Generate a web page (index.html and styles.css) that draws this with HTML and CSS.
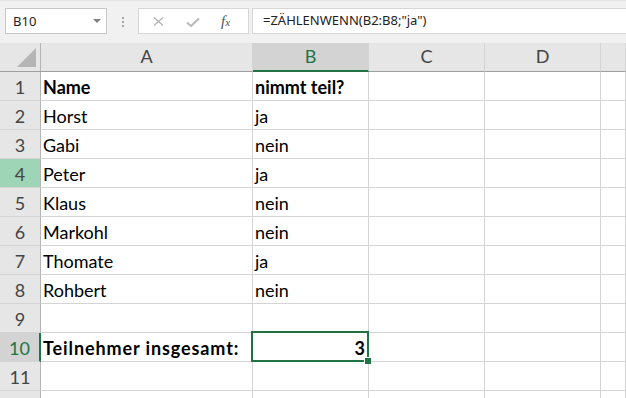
FILE: index.html
```html
<!DOCTYPE html>
<html lang="de">

<head>
    <meta charset="UTF-8">
    <title>ZÄHLENWENN</title>
    <link rel="stylesheet" href="styles.css">
</head>

<body>

    <!-- Bearbeitungsleiste -->
    <div class="toolbar">
        <div class="name-box">
            <span>B10</span>
            <span class="name-arrow"></span>
        </div>
        <div class="grip"><i></i><i></i><i></i></div>
        <div class="fx-box">
            <svg class="icon-x" width="11" height="9" viewBox="0 0 11 9">
                <path d="M1 0.5 L10 8.5 M10 0.5 L1 8.5" stroke="#b3b3b3" stroke-width="1.3" fill="none"/>
            </svg>
            <svg class="icon-ok" width="14" height="9" viewBox="0 0 14 9">
                <path d="M1 4.5 L5 8 L13 0.5" stroke="#bcbcbc" stroke-width="2.2" fill="none"/>
            </svg>
            <span class="fx">f<small>x</small></span>
        </div>
        <div class="formula">=ZÄHLENWENN(B2:B8;"ja")</div>
    </div>

    <!-- Tabelle -->
    <div class="sheet">
        <div class="corner">
            <svg width="40" height="28" viewBox="0 0 40 28">
                <polygon points="36,5 36,24 17,24" fill="#b5b5b5"/>
            </svg>
        </div>
        <div class="ch">A</div>
        <div class="ch sel">B</div>
        <div class="ch">C</div>
        <div class="ch">D</div>
        <div class="ch"></div>

        <div class="rh">1</div>
        <div class="cell bold">Name</div>
        <div class="cell bold">nimmt teil?</div>
        <div class="cell"></div>
        <div class="cell"></div>
        <div class="cell"></div>

        <div class="rh">2</div>
        <div class="cell">Horst</div>
        <div class="cell">ja</div>
        <div class="cell"></div>
        <div class="cell"></div>
        <div class="cell"></div>

        <div class="rh">3</div>
        <div class="cell">Gabi</div>
        <div class="cell">nein</div>
        <div class="cell"></div>
        <div class="cell"></div>
        <div class="cell"></div>

        <div class="rh hl">4</div>
        <div class="cell">Peter</div>
        <div class="cell">ja</div>
        <div class="cell"></div>
        <div class="cell"></div>
        <div class="cell"></div>

        <div class="rh">5</div>
        <div class="cell">Klaus</div>
        <div class="cell">nein</div>
        <div class="cell"></div>
        <div class="cell"></div>
        <div class="cell"></div>

        <div class="rh">6</div>
        <div class="cell">Markohl</div>
        <div class="cell">nein</div>
        <div class="cell"></div>
        <div class="cell"></div>
        <div class="cell"></div>

        <div class="rh">7</div>
        <div class="cell">Thomate</div>
        <div class="cell">ja</div>
        <div class="cell"></div>
        <div class="cell"></div>
        <div class="cell"></div>

        <div class="rh">8</div>
        <div class="cell">Rohbert</div>
        <div class="cell">nein</div>
        <div class="cell"></div>
        <div class="cell"></div>
        <div class="cell"></div>

        <div class="rh">9</div>
        <div class="cell"></div>
        <div class="cell"></div>
        <div class="cell"></div>
        <div class="cell"></div>
        <div class="cell"></div>

        <div class="rh sel">10</div>
        <div class="cell bold wide">Teilnehmer insgesamt:</div>
        <div class="cell bold num active">3</div>
        <div class="cell"></div>
        <div class="cell"></div>
        <div class="cell"></div>

        <div class="rh">11</div>
        <div class="cell"></div>
        <div class="cell"></div>
        <div class="cell"></div>
        <div class="cell"></div>
        <div class="cell"></div>

        <!-- Zeile 12 ist nur angeschnitten -->
        <div class="rh"></div>
        <div class="cell"></div>
        <div class="cell"></div>
        <div class="cell"></div>
        <div class="cell"></div>
        <div class="cell"></div>
    </div>

</body>

</html>
```

FILE: styles.css
```css
* {
    margin: 0;
    padding: 0;
    box-sizing: border-box;
}

body {
    width: 626px;
    height: 398px;
    overflow: hidden;
    background: #fff;
    font-family: Lato, "Liberation Sans", sans-serif;
}

/* Bearbeitungsleiste oben */
.toolbar {
    height: 43px;
    background: #f1f1f1;
    border-top: 1px solid #e4e4e4;
    display: flex;
    align-items: flex-start;
    padding: 7px 0 0 5px;
    font-family: "Noto Sans", sans-serif;
    font-size: 13px;
    color: #222;
}

.name-box {
    width: 102px;
    height: 26px;
    background: #fff;
    border: 1px solid #c6c6c6;
    display: flex;
    align-items: center;
    justify-content: space-between;
    padding: 0 5px 0 7px;
}

.name-arrow {
    width: 0;
    height: 0;
    border-left: 4px solid transparent;
    border-right: 4px solid transparent;
    border-top: 4px solid #7f7f7f;
}

.grip {
    width: 31px;
    display: flex;
    flex-direction: column;
    align-items: center;
    gap: 2px;
    padding-top: 9px;
}

.grip i {
    width: 2px;
    height: 2px;
    background: #a8a8a8;
}

.fx-box {
    width: 111px;
    height: 26px;
    background: #fff;
    border: 1px solid #d6d6d6;
    display: flex;
    align-items: center;
    padding-left: 14px;
}

.icon-x {
    margin-right: 22px;
}

.icon-ok {
    margin-top: 2px;
    margin-right: 21px;
}

.fx {
    font-family: "Liberation Serif", serif;
    font-style: italic;
    font-size: 15px;
    color: #555;
}

.fx small {
    font-size: 11px;
}

.formula {
    flex: 1;
    height: 26px;
    margin-left: 3px;
    margin-right: -2px;
    background: #fff;
    border: 1px solid #d6d6d6;
    padding-left: 10px;
    line-height: 23px;
}

/* Tabellenraster */
.sheet {
    display: grid;
    grid-template-columns: 41px 212px 116px 116px 116px 1fr;
    grid-auto-rows: 29px;
    font-size: 18px;
}

.sheet > div {
    border-right: 1px solid #d4d4d4;
    border-bottom: 1px solid #d4d4d4;
}

.corner {
    background: #e6e6e6;
}

.sheet > .corner,
.sheet > .ch {
    border-bottom: 1px solid #9f9f9f;
}

.corner svg {
    display: block;
}

.ch {
    background: #e6e6e6;
    color: #444;
    text-align: center;
    line-height: 27px;
}

.sheet > .corner,
.sheet > .rh {
    border-right: 1px solid #b4b4b4;
}

.rh {
    background: #e6e6e6;
    color: #444;
    display: flex;
    align-items: flex-end;
    justify-content: center;
    line-height: 22px;
    padding-bottom: 2px;
}

.sheet > .ch.sel {
    background: #d3d3d3;
    color: #217346;
    border-bottom: 2px solid #217346;
}

.sheet > .rh.sel {
    background: #d3d3d3;
    color: #217346;
    border-right: 2px solid #217346;
}

.rh.hl {
    background: #9fd5b7;
}

.cell {
    display: flex;
    align-items: flex-end;
    line-height: 22px;
    padding: 0 3px 2px 2px;
    color: #000;
    white-space: nowrap;
}

.bold {
    font-weight: bold;
}

/* Calibri fett läuft breiter als Lato */
.wide {
    letter-spacing: 0.9px;
}

.num {
    justify-content: flex-end;
}

/* aktive Zelle mit grünem Rahmen */
.active {
    position: relative;
}

.active::after {
    content: "";
    position: absolute;
    left: -2px;
    top: -2px;
    right: -1px;
    bottom: -1px;
    border: 2px solid #217346;
}

.active::before {
    content: "";
    position: absolute;
    right: -3px;
    bottom: -3px;
    width: 6px;
    height: 6px;
    background: #217346;
    border-left: 1px solid #fff;
    border-top: 1px solid #fff;
    z-index: 1;
}
```
